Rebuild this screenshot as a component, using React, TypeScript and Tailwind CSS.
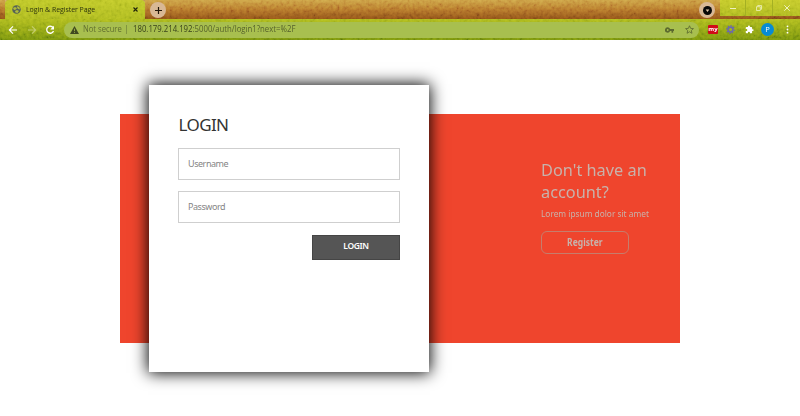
import React from "react";

function Texture({ id }: { id: string }) {
  return (
    <svg className="pointer-events-none absolute inset-0 -z-10 h-full w-full opacity-20 mix-blend-overlay" aria-hidden="true">
      <filter id={id} x="0" y="0" width="1" height="1">
        <feTurbulence type="fractalNoise" baseFrequency="0.3" numOctaves="2" seed="4" />
        <feColorMatrix values="1.6 0 0 0 -0.3  1.6 0 0 0 -0.3  1.6 0 0 0 -0.3  0 0 0 0 1" />
      </filter>
      <rect width="100%" height="100%" filter={`url(#${id})`} />
    </svg>
  );
}

function TabStrip() {
  return (
    <div className="relative isolate flex h-[19px] bg-linear-to-b from-[#cb9f45] via-[#b4742b] to-[#8c5018]">
      <Texture id="grain-strip" />
      <div className="relative isolate ml-[5px] flex w-[140px] items-center rounded-t-[4px] bg-linear-to-b from-[#bdc629] to-[#acb920] pl-[7px]">
        <Texture id="grain-tab" />
        <svg className="h-[9px] w-[9px] shrink-0" viewBox="0 0 18 18">
          <circle cx="9" cy="9" r="8.5" fill="#566256" />
          <path d="M2 6l4-2 4 2-2 3-4 1zM11 2l4 3 1 4-4-1-2-3zM6 12l4-2 4 2-3 4-4-1z" fill="#b0bb3c" />
        </svg>
        <span className="ml-[5px] w-[70px] text-[7px] leading-none tracking-[-0.07px] whitespace-nowrap text-[#30360f]">Login &amp; Register Page</span>
        <svg className="ml-auto mr-[7px] h-[5px] w-[5px]" viewBox="0 0 5 5" stroke="#20240c" strokeWidth="1.1">
          <path d="M.5.5l4 4M4.500.5l-4 4" />
        </svg>
      </div>
      <div className="mt-[2px] ml-[5px] flex h-4 w-4 items-center justify-center rounded-full bg-[#d8b895]">
        <svg className="h-[7px] w-[7px]" viewBox="0 0 7 7" stroke="#201509" strokeWidth="1.2"><path d="M3.500 0v7M0 3.500h7" /></svg>
      </div>
      <div className="mt-[2px] mr-[5px] ml-auto flex h-4 w-4 items-center justify-center rounded-full bg-[#d8b895]">
        <svg className="h-[9px] w-[9px]" viewBox="0 0 9 9"><circle cx="4.500" cy="4.500" r="4.500" fill="#080808" /><path d="M2.700 3.600h3.600L4.500 5.900z" fill="#e8cdb0" /></svg>
      </div>
      <div className="relative isolate flex h-[16px] w-[80px] bg-linear-to-b from-[#c4c92b] to-[#acb821]">
        <Texture id="grain-controls" />
        <div className="flex w-[26px] items-center justify-center border-r border-[#a4b023]">
          <svg className="h-[6px] w-[6px]" viewBox="0 0 6 6" stroke="#eef0c0"><path d="M0 3.500h6" /></svg>
        </div>
        <div className="flex w-[27px] items-center justify-center border-r border-[#a4b023]">
          <svg className="h-[6px] w-[6px]" viewBox="0 0 6 6" fill="none" stroke="#eef0c0" strokeWidth=".8"><path d="M.5 1.700h3.800v3.800H.5zM1.700 1.500V.5h3.800v3.800h-1" /></svg>
        </div>
        <div className="flex w-[27px] items-center justify-center">
          <svg className="h-[6px] w-[6px]" viewBox="0 0 6 6" stroke="#f4f5d0" strokeWidth=".9"><path d="M.3.3l5.400 5.400M5.700.3L.3 5.700" /></svg>
        </div>
      </div>
    </div>
  );
}

function Toolbar() {
  return (
    <div className="relative isolate flex h-[21px] items-center bg-linear-to-b from-[#acb91e] to-[#75900e]">
      <Texture id="grain-toolbar" />
      <svg className="ml-[8px] h-[10px] w-[10px]" viewBox="0 0 10 10" fill="none" stroke="#fff" strokeWidth="1.200"><path d="M9 5H1.500M5 1.300L1.300 5 5 8.700" /></svg>
      <svg className="ml-[9px] h-[10px] w-[10px]" viewBox="0 0 10 10" fill="none" stroke="#c4cd70" strokeWidth="1.100"><path d="M1 5h7.500M5 1.300L8.700 5 5 8.700" /></svg>
      <svg className="ml-[8px] h-[10px] w-[10px]" viewBox="0 0 10 10" fill="none"><path d="M8.100 2.700A3.500 3.500 0 1 0 8.500 6" stroke="#fff" strokeWidth="1.300" /><path d="M9 .8v3.700H5.300z" fill="#fff" /></svg>
      <div className="ml-[9px] flex h-[16px] w-[635px] items-center rounded-full bg-[#a8bf4f] pl-[6px] text-[8.500px] leading-none whitespace-nowrap">
        <svg className="h-[8px] w-[9px]" viewBox="0 0 9 8"><path d="M4.500 0L9 8H0z" fill="#404820" /><path d="M4.500 2.700v2.400M4.500 5.900v1" stroke="#a8bf4f" strokeWidth=".8" /></svg>
        <span className="ml-[4px] w-[40px] origin-left scale-x-[0.9] text-[#626f30]">Not secure</span>
        <span className="mr-[6px] ml-[3px] h-[9px] w-px bg-[#82953f]" />
        <span className="origin-left scale-x-[0.915] text-[#56612c]"><span className="text-[#38411a]">180.179.214.192</span>:5000/auth/login1?next=%2F</span>
        <svg className="mr-[11px] ml-auto h-[6px] w-[9px]" viewBox="0 0 9 6"><path d="M2.700.3a2.700 2.700 0 1 0 2.400 3.800H6.500v1.600h1.700V4H9V2H5.100A2.700 2.700 0 0 0 2.700.3zm0 1.800a.9.900 0 1 1 0 1.800.9.900 0 0 1 0-1.800z" fill="#5c692f" /></svg>
        <svg className="mr-[5px] h-[9px] w-[9px]" viewBox="0 0 24 24" fill="none" stroke="#5c692f" strokeWidth="2.200"><path d="M12 2l3 7 7.500.6-5.700 5 1.700 7.400-6.500-4-6.500 4 1.700-7.400-5.700-5L9 9z" /></svg>
      </div>
      <div className="ml-[9px] flex h-[9px] w-[10px] items-center justify-center rounded-[1px] bg-[#d00b18] pb-px text-[6px] leading-none font-bold text-white">my</div>
      <svg className="ml-[8px] h-[9px] w-[9px]" viewBox="0 0 9 9" fill="none" stroke="#6b69ae"><circle cx="4.500" cy="4.500" r="3.800" strokeWidth="1.200" strokeDasharray="1.500 1.400" /><circle cx="4.500" cy="4.500" r="2.400" strokeWidth="1.600" /></svg>
      <svg className="ml-[10px] h-[9px] w-[9px]" viewBox="0 0 24 24" fill="#fff"><path d="M20.500 11H19V7a2 2 0 0 0-2-2h-4V3.500a2.500 2.500 0 0 0-5 0V5H4a2 2 0 0 0-2 2v3.800h1.500a2.700 2.700 0 0 1 0 5.400H2V20a2 2 0 0 0 2 2h3.800v-1.500a2.700 2.700 0 0 1 5.400 0V22H17a2 2 0 0 0 2-2v-4h1.500a2.500 2.500 0 0 0 0-5z" /></svg>
      <div className="ml-[7px] flex h-[13px] w-[13px] items-center justify-center rounded-full bg-[#078bd4] text-[7.500px] leading-none text-white">P</div>
      <svg className="ml-[12px] h-[9px] w-[3px]" viewBox="0 0 3 9" fill="#fff"><circle cx="1.500" cy="1.300" r=".9" /><circle cx="1.500" cy="4.500" r=".9" /><circle cx="1.500" cy="7.700" r=".9" /></svg>
    </div>
  );
}

function Field({ label, type }: { label: string; type: string }) {
  return (
    <input
      type={type}
      placeholder={label}
      className="block h-[32px] w-[222px] border border-[#cfcfcf] bg-white px-[9px] pb-[1px] text-[9px] tracking-[-0.450px] placeholder:text-[#858585]"
    />
  );
}

export default function App() {
  return (
    <div className="h-[416px] w-[800px] overflow-hidden bg-white font-['Noto_Sans','Open_Sans',sans-serif]">
      <header className="h-[40px] font-['Open_Sans','Noto_Sans',sans-serif]">
        <TabStrip />
        <Toolbar />
      </header>
      <main className="pt-[74.300px]">
        <section className="mx-auto flex h-[229px] w-[560px] items-start bg-[#ef452d]">
          <form className="-mt-[29px] ml-[29px] h-[287px] w-[280px] shrink-0 bg-white px-[29px] shadow-[0_0_15px_1px_#000]">
            <h2 className="mt-[29px] h-[22px] pl-[0.500px] text-[17px] leading-[22px] tracking-[-0.600px] text-[#333]">LOGIN</h2>
            <div className="mt-[11.300px] flex flex-col gap-[11px]">
              <Field label="Username" type="text" />
              <Field label="Password" type="password" />
            </div>
            <button type="button" className="mt-[12px] ml-auto block h-[25px] w-[88px] border border-[#454545] bg-[#555] pb-[1px] text-[8.500px] leading-none font-semibold tracking-[-0.350px] text-white">LOGIN</button>
          </form>
          <aside className="mt-[45px] ml-[112px] w-[130px] text-[#c8b2ab]">
            <h2 className="origin-left scale-x-[0.96] text-[17px] leading-[22px] whitespace-nowrap">Don't have an<br />account?</h2>
            <p className="mt-[4px] origin-left scale-x-[0.875] text-[9.500px] leading-[14px] whitespace-nowrap">Lorem ipsum dolor sit amet</p>
            <button type="button" className="mt-[10px] block h-[23px] w-[88px] rounded-[6px] border border-[#c67d6c] pb-[2px] text-[10px] leading-none font-bold">
              <span className="inline-block scale-x-[0.850]">Register</span>
            </button>
          </aside>
        </section>
      </main>
    </div>
  );
}
